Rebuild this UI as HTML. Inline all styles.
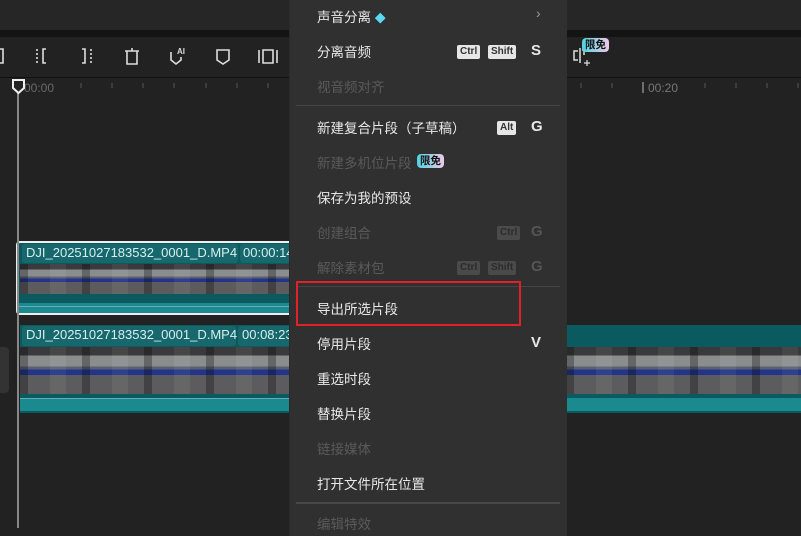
<!DOCTYPE html>
<html><head><meta charset="utf-8"><style>
*{margin:0;padding:0;box-sizing:border-box}
body{width:801px;height:528px;background:#222;position:relative;overflow:hidden;font-family:"Liberation Sans","Noto Sans CJK SC",sans-serif}
.abs{position:absolute}
.menu{left:289px;top:-4px;width:278px;height:540px;background:#303030;border-left:1px solid #2a2a2a}
.it{position:absolute;left:27px;font-size:13.5px;color:#e8e8e8;white-space:nowrap}
.dis{color:#5a5a5a}
.sep{position:absolute;left:6px;width:264px;height:1px;background:#444}
.k{position:absolute;font-size:10px;font-weight:bold;color:#333;background:#e6e6e6;border-radius:2px;padding:1px 3px;line-height:12px}
.kd{background:#4a4a4a;color:#2c2c2c}
.key{position:absolute;left:241px;font-size:15px;font-weight:bold;color:#e8e8e8}
.keyd{color:#555}
.badge{position:absolute;font-size:10.5px;font-weight:bold;color:#111;padding:0 3px;border-radius:4px;background:linear-gradient(90deg,#4fd3e0,#f0c8e8);line-height:14px}
.th{background:linear-gradient(180deg,#3a3a3c 0 18%,#8a8c8e 18% 42%,#5a6070 42% 48%,#23348a 48% 60%,#5c5c5e 60%)}
.ths{background:repeating-linear-gradient(90deg,rgba(0,0,0,.28) 0 8px,transparent 8px 30px,rgba(255,255,255,.06) 30px 46px,transparent 46px 62px)}
</style></head><body>
<div class="abs" style="left:0;top:0;width:801px;height:30px;background:#262626"></div>
<div class="abs" style="left:0;top:30px;width:801px;height:7px;background:#141414"></div>
<div class="abs" style="left:0;top:77px;width:801px;height:1px;background:#111"></div>
<svg class="abs" style="left:0;top:44px" width="290" height="24" fill="none" stroke="#ddd" stroke-width="1.6">
<path d="M0 5h3v14H0"/>
<path d="M37 5v14" stroke-dasharray="2 2"/><path d="M46 5h-3v14h3"/>
<path d="M82 5h3v14h-3"/><path d="M91 5v14" stroke-dasharray="2 2"/>
<path d="M125 7h14M132 4v3M127 7v13h10V7"/>
<path d="M171 8v8l5 4 5-4v-3"/><text x="177" y="10" font-size="8" fill="#ddd" stroke="none" font-weight="bold" font-family="Liberation Sans">AI</text>
<path d="M217 6h12v10l-6 4-6-4z"/>
<path d="M259 6v13M263 6h10v13h-10zM277 6v13"/>
</svg>
<div class="abs" style="left:24px;top:81px;font-size:12px;color:#6a6a6a">00:00</div>
<svg class="abs" style="left:0;top:80px" width="801" height="20" stroke="#555" stroke-width="1">
<path d="M81 3v5M112 3v5M143 3v5M174 3v5M206 3v5M237 3v5M268 3v5M581 3v5M612 3v5M705 3v5M736 3v5M767 3v5M798 3v5"/>
<path d="M643 2v11" stroke="#888" stroke-width="1.5"/>
</svg>
<div class="abs" style="left:648px;top:81px;font-size:12px;color:#777">00:20</div>
<svg class="abs" style="left:570px;top:46px" width="30" height="24" fill="none" stroke="#ddd" stroke-width="1.5"><path d="M8 5H4v9h4M10 2v15M12 4h2v5"/><path d="M17 14v6M14 17h6" stroke-width="1.2"/></svg>
<div class="badge" style="left:582px;top:38px">限免</div>
<div class="abs" style="left:0;top:347px;width:9px;height:46px;background:#333;border-radius:0 4px 4px 0"></div>
<!-- clip 1 -->
<div class="abs" style="left:16px;top:241px;width:276px;height:74px;border:2px solid #eee;border-right:none;border-radius:4px 0 0 4px;background:#0b5a5f;overflow:hidden">
 <div class="abs" style="left:4px;top:1px;width:216px;height:19px;background:#17686c;border-radius:3px"></div>
 <div class="abs" style="left:8px;top:2px;font-size:13px;color:#d8eeee">DJI_20251027183532_0001_D.MP4</div>
 <div class="abs" style="left:222px;top:1px;width:60px;height:19px;background:#17686c;border-radius:3px"></div>
 <div class="abs" style="left:225px;top:2px;font-size:13px;color:#d8eeee">00:00:14</div>
 <div class="abs th" style="left:2px;top:21px;width:280px;height:30px"></div>
 <div class="abs ths" style="left:2px;top:21px;width:280px;height:30px"></div>
 <div class="abs" style="left:0;top:60px;width:280px;height:12px;background:#1a8a8e"></div>
 <div class="abs" style="left:0;top:63px;width:280px;height:1px;background:#6ab"></div>
</div>
<!-- clip 2 -->
<div class="abs" style="left:20px;top:325px;width:270px;height:88px;background:#0b5a5f;overflow:hidden">
 <div class="abs" style="left:2px;top:1px;width:214px;height:20px;background:#17686c;border-radius:3px"></div>
 <div class="abs" style="left:6px;top:2px;font-size:13px;color:#d8eeee">DJI_20251027183532_0001_D.MP4</div>
 <div class="abs" style="left:218px;top:1px;width:60px;height:20px;background:#17686c;border-radius:3px"></div>
 <div class="abs" style="left:222px;top:2px;font-size:13px;color:#d8eeee">00:08:23</div>
 <div class="abs th" style="left:0;top:22px;width:270px;height:47px"></div>
 <div class="abs ths" style="left:0;top:22px;width:270px;height:47px"></div>
 <div class="abs" style="left:0;top:73px;width:270px;height:13px;background:#1a8a8e"></div>
 <div class="abs" style="left:0;top:73px;width:270px;height:1px;background:#6ab"></div>
</div>
<div class="abs" style="left:566px;top:325px;width:235px;height:88px;background:#0b5a5f;overflow:hidden">
 <div class="abs th" style="left:0;top:22px;width:235px;height:47px"></div>
 <div class="abs ths" style="left:0;top:22px;width:235px;height:47px"></div>
 <div class="abs" style="left:0;top:73px;width:235px;height:13px;background:#1a8a8e"></div>
</div>
<div class="abs" style="left:17px;top:90px;width:2px;height:438px;background:#888"></div>
<svg class="abs" style="left:11px;top:78px" width="16" height="18"><path d="M2 2h11v8l-5.5 5L2 10z" fill="#222" stroke="#eee" stroke-width="2"/></svg>
<!-- menu -->
<div class="abs menu">
 <div class="it" style="top:10px">声音分离 <span style="color:#5cd8f0;font-size:11px">◆</span></div>
 <div class="abs" style="left:246px;top:9px;color:#999;font-size:14px">›</div>
 <div class="it" style="top:45px">分离音频</div>
 <div class="k" style="left:167px;top:49px">Ctrl</div><div class="k" style="left:198px;top:49px">Shift</div><div class="key" style="top:46px">S</div>
 <div class="it dis" style="top:80px">视音频对齐</div>
 <div class="sep" style="top:109px"></div>
 <div class="it" style="top:121px">新建复合片段（子草稿）</div>
 <div class="k" style="left:207px;top:125px">Alt</div><div class="key" style="top:122px">G</div>
 <div class="it dis" style="top:156px">新建多机位片段</div>
 <div class="badge" style="left:127px;top:158px">限免</div>
 <div class="it" style="top:191px">保存为我的预设</div>
 <div class="it dis" style="top:226px">创建组合</div>
 <div class="k kd" style="left:207px;top:230px">Ctrl</div><div class="key keyd" style="top:227px">G</div>
 <div class="it dis" style="top:261px">解除素材包</div>
 <div class="k kd" style="left:167px;top:265px">Ctrl</div><div class="k kd" style="left:198px;top:265px">Shift</div><div class="key keyd" style="top:262px">G</div>
 <div class="sep" style="top:290px"></div>
 <div class="abs" style="left:6px;top:285px;width:225px;height:45px;border:2px solid #e3202a"></div>
 <div class="it" style="top:302px">导出所选片段</div>
 <div class="it" style="top:337px">停用片段</div><div class="key" style="top:338px">V</div>
 <div class="it" style="top:372px">重选时段</div>
 <div class="it" style="top:407px">替换片段</div>
 <div class="it dis" style="top:442px">链接媒体</div>
 <div class="it" style="top:477px">打开文件所在位置</div>
 <div class="sep" style="top:506px;background:#484848;height:2px"></div>
 <div class="it dis" style="top:517px">编辑特效</div>
</div>
</body></html>
